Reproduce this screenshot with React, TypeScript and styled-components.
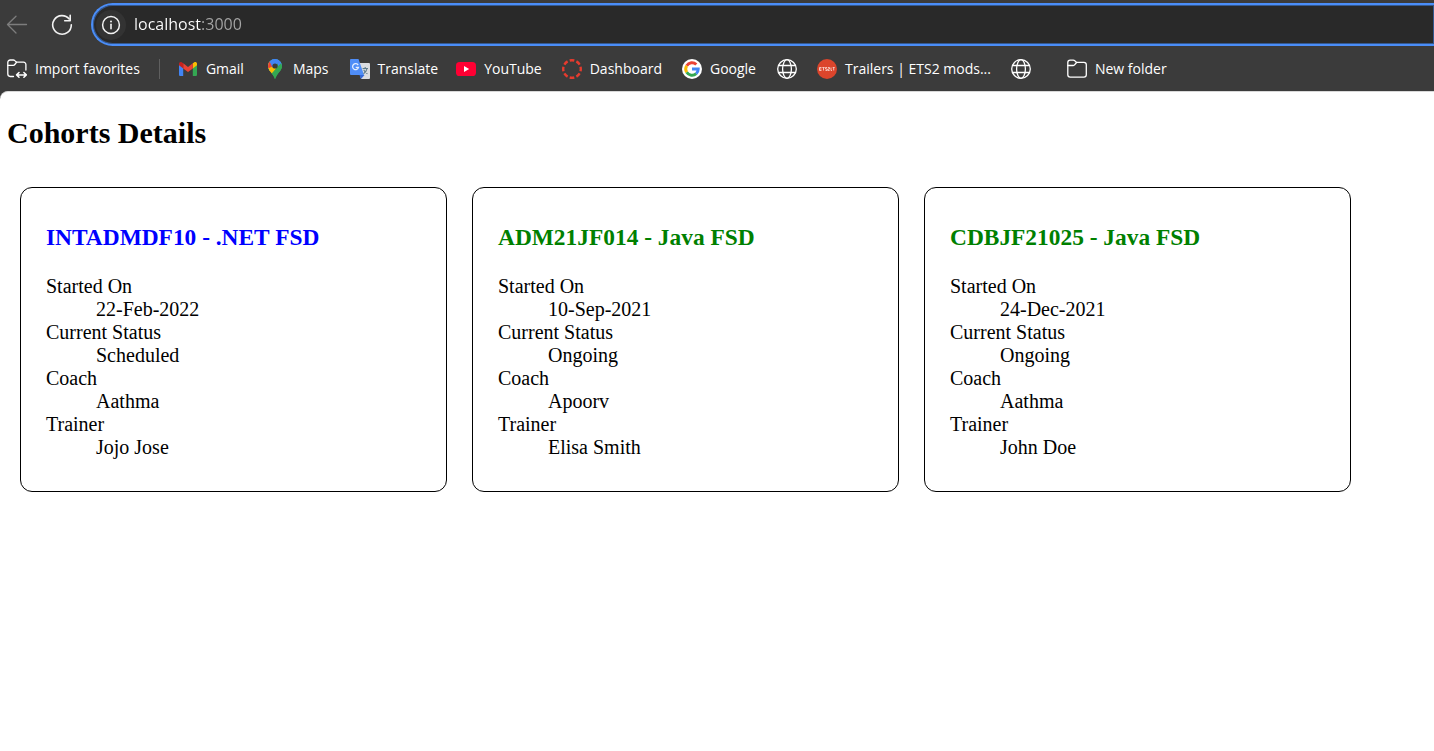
import React from "react";
import styled, { createGlobalStyle } from "styled-components";

const GlobalStyle = createGlobalStyle`
  *, *::before, *::after { box-sizing: border-box; }
  html, body { margin: 0; background: #fff; }
  body { min-height: 100vh; overflow-x: hidden; }
`;

const UI_FONT = `"Segoe UI", "Open Sans", "Noto Sans", sans-serif`;

const Chrome = styled.header`
  background: #3b3b3b;
  font-family: ${UI_FONT};
  color: #fff;
`;

const Toolbar = styled.div`
  display: flex;
  align-items: center;
  padding: 3px 0 0 6px;
`;

const ToolButton = styled.button<{ $muted?: boolean; $space: number }>`
  display: flex;
  padding: 0;
  margin-right: ${(p) => p.$space}px;
  border: 0;
  background: none;
  color: ${(p) => (p.$muted ? "#7d7d7d" : "#f2f2f2")};
`;

const AddressBar = styled.form`
  flex: 1;
  display: flex;
  align-items: center;
  gap: 8px;
  height: 43px;
  padding-left: 3px;
  border: 2px solid #4a8df8;
  border-right: 0;
  border-radius: 22px 0 0 22px;
  background: #292929;
  box-shadow: inset 0 0 0 1px #35598f;
`;

const InfoButton = styled.button`
  display: flex;
  align-items: center;
  justify-content: center;
  width: 30px;
  height: 30px;
  padding: 0;
  border: 0;
  border-radius: 50%;
  background: #333;
  color: #f2f2f2;
`;

const AddressInput = styled.input`
  flex: 1;
  min-width: 0;
  height: 32px;
  padding: 0 0 2px;
  border: 0;
  outline: 0;
  background: linear-gradient(to right, #fff 67px, #a6a6a6 67px);
  background-clip: text;
  -webkit-background-clip: text;
  -webkit-text-fill-color: transparent;
  color: #fff;
  font: 16px/30px ${UI_FONT};
`;

const BookmarkBar = styled.nav`
  display: flex;
  align-items: center;
  height: 45px;
  padding-left: 7px;
  white-space: nowrap;
`;

const Bookmark = styled.a<{ $space?: number }>`
  display: flex;
  align-items: center;
  gap: 8px;
  margin-right: ${(p) => p.$space ?? 20}px;
  color: #fff;
  font-size: 14px;
  line-height: 20px;
  text-decoration: none;

  svg { flex: none; }
`;

const FolderButton = styled(Bookmark).attrs({ as: "button" })`
  padding: 0;
  border: 0;
  background: none;
  font-family: inherit;
`;

const Divider = styled.span`
  width: 1px;
  height: 20px;
  margin-right: 18px;
  background: #5f5f5f;
`;

/* The dark backing shows behind the page's rounded corner. */
const Backing = styled.div`
  background: linear-gradient(#3b3b3b 12px, #fff 12px);
`;

const Page = styled.main`
  padding: 24px 7px;
  border-top: 1px solid #d8d8d8;
  border-radius: 8px 0 0 0;
  background: #fff;
  color: #000;
  font: 20px/23px "Liberation Serif", "Times New Roman", serif;
`;

const PageTitle = styled.h2`
  margin: 0 0 37px;
  font-size: 30px;
  line-height: 34px;
`;

const CardList = styled.div`
  display: flex;
  flex-wrap: wrap;
  gap: 25px;
  padding-left: 13px;
`;

const Card = styled.section`
  width: 427px;
  max-width: 100%;
  padding: 12px 25px;
  border: 1px solid #000;
  border-radius: 12px;
`;

const CardTitle = styled.h3<{ $ongoing: boolean }>`
  margin: 24px 0;
  color: ${(p) => (p.$ongoing ? "green" : "blue")};
  line-height: 27px;
`;

const Details = styled.dl`
  margin: 0 0 20px;
  dd { margin: 0 0 0 50px; }
`;

const line = { fill: "none", stroke: "currentColor", strokeWidth: 1.3, strokeLinecap: "round", strokeLinejoin: "round" } as const;

const BackIcon = () => (
  <svg width="22" height="22" viewBox="0 0 22 22" aria-hidden="true" {...line}>
    <path d="M20.5 10.500H1.500M10 2.200 1.500 10.500 10 19" />
  </svg>
);

const ReloadIcon = () => (
  <svg width="22" height="22" viewBox="0 0 22 22" aria-hidden="true" {...line} strokeWidth={1.6}>
    <path d="M20.300 10.800A9.300 9.300 0 1 1 18.200 5" />
    <path d="M19.200 1.200v5.600h-5.500" />
  </svg>
);

const InfoIcon = () => (
  <svg width="20" height="20" viewBox="0 0 20 20" aria-hidden="true" {...line}>
    <circle cx="10" cy="10" r="8.400" strokeWidth="1.500" />
    <path d="M10 9.300v4.400" strokeWidth="1.600" />
    <circle cx="10" cy="6.400" r="1" fill="currentColor" stroke="none" />
  </svg>
);

const ImportIcon = () => (
  <svg width="20" height="20" viewBox="0 0 20 20" aria-hidden="true" {...line}>
    <path d="M6.500 17.500H3.200A2.400 2.400 0 0 1 .8 15.100V3.400A2.400 2.400 0 0 1 3.200 1H6.300Q7.200 1 7.800 1.600L9.500 3.200H16.500A2.400 2.400 0 0 1 18.900 5.600V11" />
    <path d="M.8 6.300H6.300Q7.200 6.300 7.800 5.500L9.500 3.300" />
    <path d="M9.600 15.900H19.300M12 13.500 9.600 15.900 12 18.300M16.900 13.500 19.300 15.900 16.900 18.300" strokeWidth="1.500" />
  </svg>
);

const FolderIcon = () => (
  <svg width="20" height="20" viewBox="0 0 20 20" aria-hidden="true" {...line}>
    <path d="M.8 3.600A2.400 2.400 0 0 1 3.200 1.200H6.300Q7.200 1.200 7.800 1.800L9.500 3.400H16.900A2.400 2.400 0 0 1 19.300 5.800V15.800A2.400 2.400 0 0 1 16.900 18.200H3.200A2.400 2.400 0 0 1 .8 15.800Z" />
    <path d="M.8 6.500H6.300Q7.200 6.500 7.800 5.700L9.500 3.500" />
  </svg>
);

const GlobeIcon = () => (
  <svg width="20" height="20" viewBox="0 0 20 20" aria-hidden="true" {...line}>
    <circle cx="10" cy="10" r="9.300" />
    <ellipse cx="10" cy="10" rx="4.400" ry="9.300" />
    <path d="M1.600 6.500H18.400M1.600 13.500H18.400" />
  </svg>
);

const GmailIcon = () => (
  <svg width="20" height="20" viewBox="0 0 20 20" aria-hidden="true">
    <path d="M1 5v10.700c0 .8.600 1.300 1.300 1.300h2.900V8.500z" fill="#4285f4" />
    <path d="M14.800 17h2.900c.7 0 1.300-.5 1.300-1.300V5l-4.200 3.500z" fill="#34a853" />
    <path d="M14.800 4.300v5.200L19 6.300V4.700c0-1.700-1.900-2.300-3-1.300z" fill="#fbbc04" />
    <path d="M5.200 9.500V4.300L10 7.900l4.800-3.600v5.200L10 13.100z" fill="#ea4335" />
    <path d="M1 4.700v1.600l4.200 3.200V4.300L4 3.400C2.700 2.400 1 3.200 1 4.700z" fill="#c5221f" />
  </svg>
);

const MapsIcon = () => (
  <svg width="20" height="20" viewBox="0 0 20 20" aria-hidden="true">
    <defs>
      <clipPath id="pin">
        <path d="M10 0a7 7 0 0 0-7 7c0 4.700 4.600 6.400 6.300 12 .2.700.400 1 .7 1s.5-.3.700-1C12.400 13.400 17 11.700 17 7a7 7 0 0 0-7-7z" />
      </clipPath>
    </defs>
    <g clipPath="url(#pin)">
      <path d="M0 0h20v20H0z" fill="#34a853" />
      <path d="M4 12.500 16.500-1H0v15z" fill="#4285f4" />
      <path d="M0 0 4.600 2.400 10 7 4.200 13.800 0 12z" fill="#fbbc04" />
      <path d="M0 1 4.600 2.400 9.500 6.500 3 9.500 0 9z" fill="#ea4335" />
      <path d="M4.600 2.400C7-1 12-1 14.800 1.900L8 9.500z" fill="#4285f4" />
      <path d="M3.500 12 8 8l3.500 1.500L6 15.500z" fill="#fbbc04" />
      <path d="M12.500 4.500 15 1l3 4-4 5z" fill="#4285f4" />
      <path d="M12 8.500 16.200 4 18 9l-6 9-6.500-2z" fill="#34a853" />
    </g>
    <circle cx="10" cy="7" r="2.600" fill="#3b3b3b" />
  </svg>
);

const TranslateIcon = () => (
  <svg width="20" height="20" viewBox="0 0 20 20" aria-hidden="true">
    <path d="M8 4h10.700c.8 0 1.300.5 1.300 1.300v13.400c0 .8-.5 1.300-1.300 1.300H11z" fill="#dadce0" />
    <path d="M9.500 16h5L11 20z" fill="#3367d6" />
    <path d="M1.300 0h7.200l5.500 16H1.300C.5 16 0 15.500 0 14.700V1.300C0 .5.500 0 1.300 0z" fill="#4f8df7" />
    <path d="M8.200 6.100A3 3 0 1 0 8.500 8.400H5.700" fill="none" stroke="#e4edff" strokeWidth="1.300" />
    <path d="M12.600 9.500H18M15.200 8v1.500M17 9.700c-.5 2.500-2 4-3.500 5M13.700 10.800c.6 1.600 2 2.900 3.700 3.900" fill="none" stroke="#607d8b" strokeWidth="1.100" />
  </svg>
);

const YouTubeIcon = () => (
  <svg width="20" height="20" viewBox="0 0 20 20" aria-hidden="true">
    <rect y="3" width="20" height="14" rx="3.600" fill="#ff0033" />
    <path d="M8 7v6l5.200-3z" fill="#fff" />
  </svg>
);

const DashboardIcon = () => (
  <svg width="20" height="20" viewBox="0 0 20 20" aria-hidden="true">
    <g fill="none" stroke="#e63b2e" strokeWidth="2.400">
      {[0, 45, 90, 135, 180, 225, 270, 315].map((a) => (
        <path key={a} d="M7.700 1.500Q10 .9 12.300 1.500" transform={`rotate(${a} 10 10)`} />
      ))}
    </g>
  </svg>
);

const GoogleIcon = () => (
  <svg width="20" height="20" viewBox="0 0 20 20" aria-hidden="true">
    <circle cx="10" cy="10" r="10" fill="#fff" />
    <g fill="none" strokeWidth="3">
      <path d="M4.700 6.700A6.200 6.200 0 0 1 14.300 5.500" stroke="#ea4335" />
      <path d="M4.700 13.300A6.200 6.200 0 0 1 4.700 6.700" stroke="#fbbc05" />
      <path d="M14.200 14.600A6.200 6.200 0 0 1 4.700 13.300" stroke="#34a853" />
      <path d="M10 10h6.200A6.200 6.200 0 0 1 14.200 14.600" stroke="#4285f4" />
    </g>
  </svg>
);

const TrailersIcon = () => (
  <svg width="20" height="20" viewBox="0 0 20 20" aria-hidden="true">
    <circle cx="10" cy="10" r="10" fill="#dc452c" />
    <path d="M2.500 8.500h2M2.500 10h2M2.500 11.500h2M2.500 8.500v3M5.300 8.500h2.400M6.500 8.500v3M10.200 8.500H8.500V10h1.700v1.500H8.500M11 8.500h1.500V10H11v1.500h1.600M14 8.500v3h1M15.700 8.500h2M16.700 8.500v3" fill="none" stroke="#f8cfc6" strokeWidth=".9" />
  </svg>
);

const bookmarks = [
  { label: "Gmail", Icon: GmailIcon, space: 21 },
  { label: "Maps", Icon: MapsIcon, space: 21 },
  { label: "Translate", Icon: TranslateIcon, space: 18 },
  { label: "YouTube", Icon: YouTubeIcon },
  { label: "Dashboard", Icon: DashboardIcon },
  { label: "Google", Icon: GoogleIcon, space: 21 },
  { label: "", Icon: GlobeIcon },
  { label: "Trailers | ETS2 mods...", Icon: TrailersIcon, space: 20 },
  { label: "", Icon: GlobeIcon, space: 36 },
];

const cohorts = [
  { title: "INTADMDF10 - .NET FSD", started: "22-Feb-2022", status: "Scheduled", coach: "Aathma", trainer: "Jojo Jose" },
  { title: "ADM21JF014 - Java FSD", started: "10-Sep-2021", status: "Ongoing", coach: "Apoorv", trainer: "Elisa Smith" },
  { title: "CDBJF21025 - Java FSD", started: "24-Dec-2021", status: "Ongoing", coach: "Aathma", trainer: "John Doe" },
];

type Cohort = (typeof cohorts)[number];

const CohortCard = ({ cohort }: { cohort: Cohort }) => (
  <Card>
    <CardTitle $ongoing={cohort.status === "Ongoing"}>{cohort.title}</CardTitle>
    <Details>
      <dt>Started On</dt>
      <dd>{cohort.started}</dd>
      <dt>Current Status</dt>
      <dd>{cohort.status}</dd>
      <dt>Coach</dt>
      <dd>{cohort.coach}</dd>
      <dt>Trainer</dt>
      <dd>{cohort.trainer}</dd>
    </Details>
  </Card>
);

export default function App() {
  return (
    <>
      <GlobalStyle />
      <Chrome>
        <Toolbar>
          <ToolButton $muted $space={23} type="button" aria-label="Back"><BackIcon /></ToolButton>
          <ToolButton $space={18} type="button" aria-label="Reload"><ReloadIcon /></ToolButton>
          <AddressBar onSubmit={(e) => e.preventDefault()}>
            <InfoButton type="button" aria-label="Site information"><InfoIcon /></InfoButton>
            <AddressInput aria-label="Address" defaultValue="localhost:3000" spellCheck={false} />
          </AddressBar>
        </Toolbar>
        <BookmarkBar aria-label="Favorites">
          <FolderButton $space={19}><ImportIcon />Import favorites</FolderButton>
          <Divider />
          {bookmarks.map(({ label, Icon, space }, i) => (
            <Bookmark key={i} href="#" $space={space} aria-label={label || "Website"}>
              <Icon />
              {label}
            </Bookmark>
          ))}
          <FolderButton><FolderIcon />New folder</FolderButton>
        </BookmarkBar>
      </Chrome>
      <Backing>
        <Page>
          <PageTitle>Cohorts Details</PageTitle>
          <CardList>
            {cohorts.map((cohort) => (
              <CohortCard key={cohort.title} cohort={cohort} />
            ))}
          </CardList>
        </Page>
      </Backing>
    </>
  );
}
